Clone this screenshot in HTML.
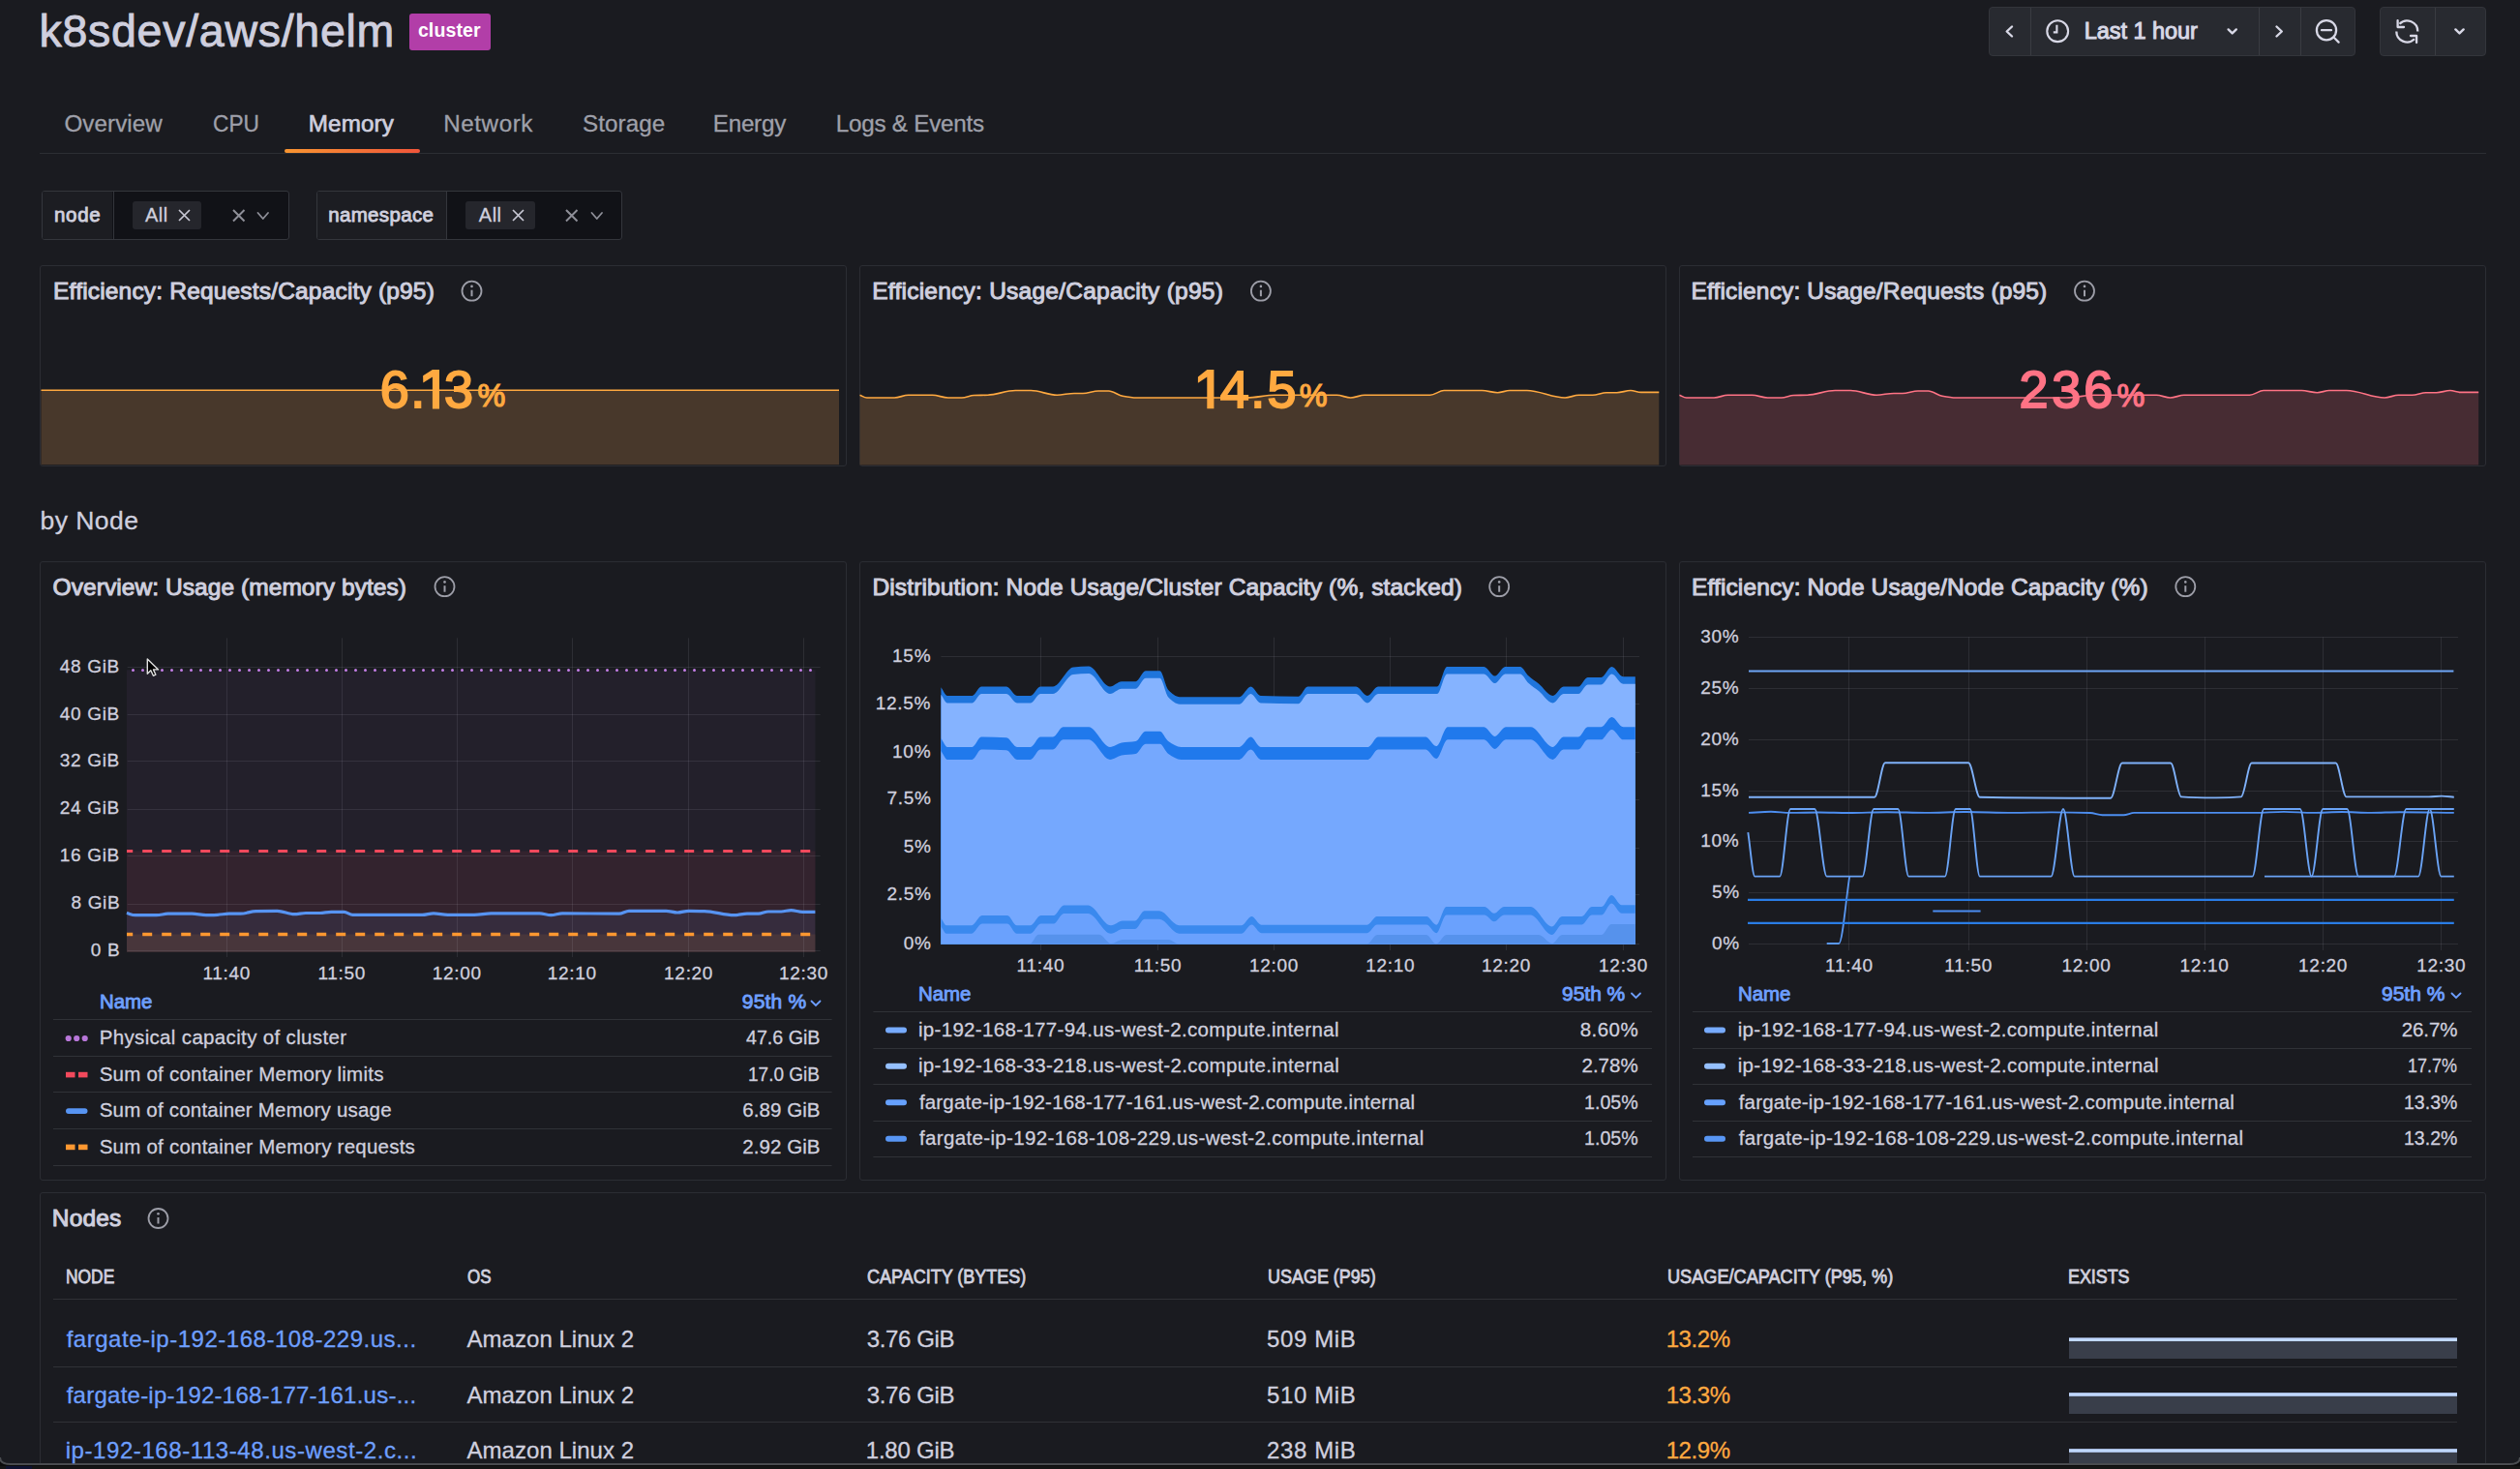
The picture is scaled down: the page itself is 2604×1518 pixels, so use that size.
<!DOCTYPE html>
<html><head><meta charset="utf-8"><style>
html,body{margin:0;padding:0}
body{width:2604px;height:1518px;background:#1a1b20;position:relative;overflow:hidden;font-family:"Liberation Sans",sans-serif}
.t{position:absolute;white-space:nowrap;line-height:1}
.a{position:absolute;box-sizing:border-box}
svg{position:absolute;left:0;top:0}
</style></head><body>
<div class="a" style="left:41px;top:274px;width:834px;height:208px;border:1px solid #2b2d33;border-radius:3px"></div>
<div class="a" style="left:41px;top:580px;width:834px;height:640px;border:1px solid #2b2d33;border-radius:3px"></div>
<div class="a" style="left:888px;top:274px;width:834px;height:208px;border:1px solid #2b2d33;border-radius:3px"></div>
<div class="a" style="left:888px;top:580px;width:834px;height:640px;border:1px solid #2b2d33;border-radius:3px"></div>
<div class="a" style="left:1735px;top:274px;width:834px;height:208px;border:1px solid #2b2d33;border-radius:3px"></div>
<div class="a" style="left:1735px;top:580px;width:834px;height:640px;border:1px solid #2b2d33;border-radius:3px"></div>
<div class="a" style="left:41px;top:1232px;width:2528px;height:328px;border:1px solid #2b2d33;border-radius:3px"></div>
<div class="a" style="left:423.3px;top:14.3px;width:83.5px;height:37.7px;background:#b23ea8;border-radius:3px"></div>
<div class="a" style="left:2055px;top:7px;width:379px;height:51px;background:#282a30;border:1px solid #33353b;border-radius:4px"></div>
<div class="a" style="left:2459px;top:7px;width:110px;height:51px;background:#282a30;border:1px solid #33353b;border-radius:4px"></div>
<div class="a" style="left:2098px;top:8px;width:1px;height:49px;background:#3a3c42"></div>
<div class="a" style="left:2334px;top:8px;width:1px;height:49px;background:#3a3c42"></div>
<div class="a" style="left:2377px;top:8px;width:1px;height:49px;background:#3a3c42"></div>
<div class="a" style="left:2516px;top:8px;width:1px;height:49px;background:#3a3c42"></div>
<div class="a" style="left:41px;top:158px;width:2528px;height:1px;background:#2c2e33"></div>
<div class="a" style="left:294px;top:154px;width:140px;height:4px;background:linear-gradient(90deg,#f89531,#f0553a);border-radius:2px"></div>
<div class="a" style="left:43.3px;top:197px;width:255.39999999999998px;height:51px;background:#111217;border:1px solid #34363c;border-radius:3px"></div>
<div class="a" style="left:44.3px;top:198px;width:72.2px;height:49px;background:#1c1d22;border-radius:2px 0 0 2px"></div>
<div class="a" style="left:116.5px;top:198px;width:1.0px;height:49px;background:#34363c"></div>
<div class="a" style="left:137px;top:208.2px;width:70.6px;height:28.600000000000023px;background:#25262c;border-radius:3px"></div>
<div class="a" style="left:326.5px;top:197px;width:316.0px;height:51px;background:#111217;border:1px solid #34363c;border-radius:3px"></div>
<div class="a" style="left:327.5px;top:198px;width:133.89999999999998px;height:49px;background:#1c1d22;border-radius:2px 0 0 2px"></div>
<div class="a" style="left:461.4px;top:198px;width:1.0px;height:49px;background:#34363c"></div>
<div class="a" style="left:481.3px;top:208.2px;width:71.49999999999994px;height:28.600000000000023px;background:#25262c;border-radius:3px"></div>
<svg width="2604" height="1518" viewBox="0 0 2604 1518"><path d="M185 217L196 228M196 217L185 228" stroke="#c8c8d4" stroke-width="1.7" fill="none"/><path d="M241 217L252.5 228.5M252.5 217L241 228.5" stroke="#8e8f98" stroke-width="2" fill="none"/><path d="M266.5 220L271.75 226L277 220" stroke="#8e8f98" stroke-width="1.8" fill="none" stroke-linecap="round" stroke-linejoin="round"/><path d="M530 217L541 228M541 217L530 228" stroke="#c8c8d4" stroke-width="1.7" fill="none"/><path d="M585 217L596.5 228.5M596.5 217L585 228.5" stroke="#8e8f98" stroke-width="2" fill="none"/><path d="M611.5 220L616.75 226L622 220" stroke="#8e8f98" stroke-width="1.8" fill="none" stroke-linecap="round" stroke-linejoin="round"/><path d="M2079 27.5L2073.7 32.5L2079 37.5" stroke="#d8d8e6" stroke-width="2.4" fill="none" stroke-linecap="round" stroke-linejoin="round"/><path d="M2352.5 27.5L2357.8 32.5L2352.5 37.5" stroke="#d8d8e6" stroke-width="2.4" fill="none" stroke-linecap="round" stroke-linejoin="round"/><path d="M2302.6 30.4L2306.7 34.4L2310.8 30.4" stroke="#d8d8e6" stroke-width="2.4" fill="none" stroke-linecap="round" stroke-linejoin="round"/><path d="M2537.4 30.4L2541.5 34.4L2545.6000000000004 30.4" stroke="#d8d8e6" stroke-width="2.4" fill="none" stroke-linecap="round" stroke-linejoin="round"/><circle cx="2126.2" cy="32.2" r="10.9" stroke="#d8d8e6" stroke-width="2.1" fill="none"/><path d="M2125.4 25.8V33.4H2121.8" stroke="#d8d8e6" stroke-width="2.1" fill="none"/><circle cx="2404" cy="31.2" r="10.1" stroke="#d8d8e6" stroke-width="2.3" fill="none"/><path d="M2399 31.2H2409M2412 39L2416.6 43.6" stroke="#d8d8e6" stroke-width="2.3" fill="none" stroke-linecap="round"/><path d="M2479.5 24.7A11 11 0 0 1 2498.3 32.5" stroke="#d8d8e6" stroke-width="2.3" fill="none"/><path d="M2476.3 32.5A11 11 0 0 0 2495 40.3" stroke="#d8d8e6" stroke-width="2.3" fill="none"/><path d="M2477.6 21.2V28H2484M2497.1 44V37H2491" stroke="#d8d8e6" stroke-width="2.3" fill="none" stroke-linecap="round" stroke-linejoin="round"/><circle cx="487.5" cy="300.7" r="10" stroke="#9d9ea8" stroke-width="1.8" fill="none"/><path d="M487.5 299.7V306.2" stroke="#9d9ea8" stroke-width="2" /><circle cx="487.5" cy="295.9" r="1.3" fill="#9d9ea8"/><circle cx="1302.9" cy="300.7" r="10" stroke="#9d9ea8" stroke-width="1.8" fill="none"/><path d="M1302.9 299.7V306.2" stroke="#9d9ea8" stroke-width="2" /><circle cx="1302.9" cy="295.9" r="1.3" fill="#9d9ea8"/><circle cx="2154" cy="300.7" r="10" stroke="#9d9ea8" stroke-width="1.8" fill="none"/><path d="M2154 299.7V306.2" stroke="#9d9ea8" stroke-width="2" /><circle cx="2154" cy="295.9" r="1.3" fill="#9d9ea8"/><circle cx="459.5" cy="606.2" r="10" stroke="#9d9ea8" stroke-width="1.8" fill="none"/><path d="M459.5 605.2V611.7" stroke="#9d9ea8" stroke-width="2" /><circle cx="459.5" cy="601.4000000000001" r="1.3" fill="#9d9ea8"/><circle cx="1549.2" cy="606.2" r="10" stroke="#9d9ea8" stroke-width="1.8" fill="none"/><path d="M1549.2 605.2V611.7" stroke="#9d9ea8" stroke-width="2" /><circle cx="1549.2" cy="601.4000000000001" r="1.3" fill="#9d9ea8"/><circle cx="2258.3" cy="606.2" r="10" stroke="#9d9ea8" stroke-width="1.8" fill="none"/><path d="M2258.3 605.2V611.7" stroke="#9d9ea8" stroke-width="2" /><circle cx="2258.3" cy="601.4000000000001" r="1.3" fill="#9d9ea8"/><circle cx="163.5" cy="1259" r="10" stroke="#9d9ea8" stroke-width="1.8" fill="none"/><path d="M163.5 1258V1264.5" stroke="#9d9ea8" stroke-width="2" /><circle cx="163.5" cy="1254.2" r="1.3" fill="#9d9ea8"/><rect x="42.5" y="403.2" width="824.5" height="77" fill="#48382b"/><path d="M42.5 403.2H867" stroke="#ffa940" stroke-width="1.6"/><path d="M888.57 408.21C890.95 409.17 893.33 411.07 895.71 411.07C905.24 411.07 914.76 411.07 924.29 411.07C929.05 411.07 933.81 408.21 938.57 408.21C946.90 408.21 955.24 408.21 963.57 408.21C968.93 408.21 974.29 411.07 979.64 411.07C984.40 411.07 989.17 411.07 993.93 411.07C998.10 411.07 1002.26 408.76 1006.43 408.57C1011.19 408.36 1015.95 408.41 1020.71 408.21C1030.24 407.83 1039.76 403.57 1049.29 403.57C1054.64 403.57 1060.00 403.57 1065.36 403.57C1074.29 403.57 1083.21 408.21 1092.14 408.21C1098.10 408.21 1104.05 406.43 1110.00 406.43C1112.98 406.43 1115.95 406.43 1118.93 406.43C1124.29 406.43 1129.64 403.93 1135.00 403.93C1138.57 403.93 1142.14 403.93 1145.71 403.93C1150.48 403.93 1155.24 408.39 1160.00 409.29C1164.76 410.18 1169.52 411.07 1174.29 411.07C1200.48 411.07 1226.67 411.07 1252.86 411.07C1264.76 411.07 1276.67 411.07 1288.57 411.07C1298.10 411.07 1307.62 408.21 1317.14 408.21C1331.43 408.21 1345.71 408.21 1360.00 408.21C1367.14 408.21 1374.29 408.21 1381.43 408.21C1386.19 408.21 1390.95 411.07 1395.71 411.07C1400.48 411.07 1405.24 408.21 1410.00 408.21C1432.62 408.21 1455.24 408.21 1477.86 408.21C1482.62 408.21 1487.38 403.57 1492.14 403.57C1505.24 403.57 1518.33 403.57 1531.43 403.57C1536.79 403.57 1542.14 405.71 1547.50 405.71C1551.67 405.71 1555.83 403.57 1560.00 403.57C1565.95 403.57 1571.90 403.57 1577.86 403.57C1590.95 403.57 1604.05 411.07 1617.14 411.07C1621.90 411.07 1626.67 408.21 1631.43 408.21C1636.19 408.21 1640.95 408.21 1645.71 408.21C1650.48 408.21 1655.24 405.71 1660.00 405.71C1663.57 405.71 1667.14 405.71 1670.71 405.71C1675.48 405.71 1680.24 403.57 1685.00 403.57C1688.57 403.57 1692.14 405.36 1695.71 405.36C1701.90 405.36 1708.10 405.36 1714.29 405.36L1714.29 480.5L888.57 480.5Z" fill="#48382b" /><path d="M888.57 408.21C890.95 409.17 893.33 411.07 895.71 411.07C905.24 411.07 914.76 411.07 924.29 411.07C929.05 411.07 933.81 408.21 938.57 408.21C946.90 408.21 955.24 408.21 963.57 408.21C968.93 408.21 974.29 411.07 979.64 411.07C984.40 411.07 989.17 411.07 993.93 411.07C998.10 411.07 1002.26 408.76 1006.43 408.57C1011.19 408.36 1015.95 408.41 1020.71 408.21C1030.24 407.83 1039.76 403.57 1049.29 403.57C1054.64 403.57 1060.00 403.57 1065.36 403.57C1074.29 403.57 1083.21 408.21 1092.14 408.21C1098.10 408.21 1104.05 406.43 1110.00 406.43C1112.98 406.43 1115.95 406.43 1118.93 406.43C1124.29 406.43 1129.64 403.93 1135.00 403.93C1138.57 403.93 1142.14 403.93 1145.71 403.93C1150.48 403.93 1155.24 408.39 1160.00 409.29C1164.76 410.18 1169.52 411.07 1174.29 411.07C1200.48 411.07 1226.67 411.07 1252.86 411.07C1264.76 411.07 1276.67 411.07 1288.57 411.07C1298.10 411.07 1307.62 408.21 1317.14 408.21C1331.43 408.21 1345.71 408.21 1360.00 408.21C1367.14 408.21 1374.29 408.21 1381.43 408.21C1386.19 408.21 1390.95 411.07 1395.71 411.07C1400.48 411.07 1405.24 408.21 1410.00 408.21C1432.62 408.21 1455.24 408.21 1477.86 408.21C1482.62 408.21 1487.38 403.57 1492.14 403.57C1505.24 403.57 1518.33 403.57 1531.43 403.57C1536.79 403.57 1542.14 405.71 1547.50 405.71C1551.67 405.71 1555.83 403.57 1560.00 403.57C1565.95 403.57 1571.90 403.57 1577.86 403.57C1590.95 403.57 1604.05 411.07 1617.14 411.07C1621.90 411.07 1626.67 408.21 1631.43 408.21C1636.19 408.21 1640.95 408.21 1645.71 408.21C1650.48 408.21 1655.24 405.71 1660.00 405.71C1663.57 405.71 1667.14 405.71 1670.71 405.71C1675.48 405.71 1680.24 403.57 1685.00 403.57C1688.57 403.57 1692.14 405.36 1695.71 405.36C1701.90 405.36 1708.10 405.36 1714.29 405.36" stroke="#ffa940" stroke-width="1.6" fill="none" stroke-linejoin="round" /><path d="M1735.47 408.21C1737.85 409.17 1740.23 411.07 1742.61 411.07C1752.14 411.07 1761.66 411.07 1771.19 411.07C1775.95 411.07 1780.71 408.21 1785.47 408.21C1793.80 408.21 1802.14 408.21 1810.47 408.21C1815.83 408.21 1821.19 411.07 1826.54 411.07C1831.30 411.07 1836.07 411.07 1840.83 411.07C1845.00 411.07 1849.16 408.76 1853.33 408.57C1858.09 408.36 1862.85 408.41 1867.61 408.21C1877.14 407.83 1886.66 403.57 1896.19 403.57C1901.54 403.57 1906.90 403.57 1912.26 403.57C1921.19 403.57 1930.11 408.21 1939.04 408.21C1945.00 408.21 1950.95 406.43 1956.90 406.43C1959.88 406.43 1962.85 406.43 1965.83 406.43C1971.19 406.43 1976.54 403.93 1981.90 403.93C1985.47 403.93 1989.04 403.93 1992.61 403.93C1997.38 403.93 2002.14 408.39 2006.90 409.29C2011.66 410.18 2016.42 411.07 2021.19 411.07C2047.38 411.07 2073.57 411.07 2099.76 411.07C2111.66 411.07 2123.57 411.07 2135.47 411.07C2145.00 411.07 2154.52 408.21 2164.04 408.21C2178.33 408.21 2192.61 408.21 2206.90 408.21C2214.04 408.21 2221.19 408.21 2228.33 408.21C2233.09 408.21 2237.85 411.07 2242.61 411.07C2247.38 411.07 2252.14 408.21 2256.90 408.21C2279.52 408.21 2302.14 408.21 2324.76 408.21C2329.52 408.21 2334.28 403.57 2339.04 403.57C2352.14 403.57 2365.23 403.57 2378.33 403.57C2383.69 403.57 2389.04 405.71 2394.40 405.71C2398.57 405.71 2402.73 403.57 2406.90 403.57C2412.85 403.57 2418.80 403.57 2424.76 403.57C2437.85 403.57 2450.95 411.07 2464.04 411.07C2468.80 411.07 2473.57 408.21 2478.33 408.21C2483.09 408.21 2487.85 408.21 2492.61 408.21C2497.38 408.21 2502.14 405.71 2506.90 405.71C2510.47 405.71 2514.04 405.71 2517.61 405.71C2522.38 405.71 2527.14 403.57 2531.90 403.57C2535.47 403.57 2539.04 405.36 2542.61 405.36C2548.80 405.36 2555.00 405.36 2561.19 405.36L2561.19 480.5L1735.47 480.5Z" fill="#472c33" /><path d="M1735.47 408.21C1737.85 409.17 1740.23 411.07 1742.61 411.07C1752.14 411.07 1761.66 411.07 1771.19 411.07C1775.95 411.07 1780.71 408.21 1785.47 408.21C1793.80 408.21 1802.14 408.21 1810.47 408.21C1815.83 408.21 1821.19 411.07 1826.54 411.07C1831.30 411.07 1836.07 411.07 1840.83 411.07C1845.00 411.07 1849.16 408.76 1853.33 408.57C1858.09 408.36 1862.85 408.41 1867.61 408.21C1877.14 407.83 1886.66 403.57 1896.19 403.57C1901.54 403.57 1906.90 403.57 1912.26 403.57C1921.19 403.57 1930.11 408.21 1939.04 408.21C1945.00 408.21 1950.95 406.43 1956.90 406.43C1959.88 406.43 1962.85 406.43 1965.83 406.43C1971.19 406.43 1976.54 403.93 1981.90 403.93C1985.47 403.93 1989.04 403.93 1992.61 403.93C1997.38 403.93 2002.14 408.39 2006.90 409.29C2011.66 410.18 2016.42 411.07 2021.19 411.07C2047.38 411.07 2073.57 411.07 2099.76 411.07C2111.66 411.07 2123.57 411.07 2135.47 411.07C2145.00 411.07 2154.52 408.21 2164.04 408.21C2178.33 408.21 2192.61 408.21 2206.90 408.21C2214.04 408.21 2221.19 408.21 2228.33 408.21C2233.09 408.21 2237.85 411.07 2242.61 411.07C2247.38 411.07 2252.14 408.21 2256.90 408.21C2279.52 408.21 2302.14 408.21 2324.76 408.21C2329.52 408.21 2334.28 403.57 2339.04 403.57C2352.14 403.57 2365.23 403.57 2378.33 403.57C2383.69 403.57 2389.04 405.71 2394.40 405.71C2398.57 405.71 2402.73 403.57 2406.90 403.57C2412.85 403.57 2418.80 403.57 2424.76 403.57C2437.85 403.57 2450.95 411.07 2464.04 411.07C2468.80 411.07 2473.57 408.21 2478.33 408.21C2483.09 408.21 2487.85 408.21 2492.61 408.21C2497.38 408.21 2502.14 405.71 2506.90 405.71C2510.47 405.71 2514.04 405.71 2517.61 405.71C2522.38 405.71 2527.14 403.57 2531.90 403.57C2535.47 403.57 2539.04 405.36 2542.61 405.36C2548.80 405.36 2555.00 405.36 2561.19 405.36" stroke="#ff7385" stroke-width="1.6" fill="none" stroke-linejoin="round" /><polygon points="437.1,388.3 446.9,381.9 454,381.9 454,422.4 446.9,422.4 446.9,389.4 437.3,395.6" fill="#ffa940"/><polygon points="1237.9,389.4 1247.3,382.1 1254.4,382.1 1254.4,422.2 1247.3,422.2 1247.3,389.6 1237.9,395.8" fill="#ffa940"/><path d="M972.4 678.5H1694" stroke="rgba(204,204,220,0.11)" stroke-width="1"/><path d="M972.4 727.5H1694" stroke="rgba(204,204,220,0.11)" stroke-width="1"/><path d="M972.4 777.5H1694" stroke="rgba(204,204,220,0.11)" stroke-width="1"/><path d="M972.4 826.5H1694" stroke="rgba(204,204,220,0.11)" stroke-width="1"/><path d="M972.4 876.5H1694" stroke="rgba(204,204,220,0.11)" stroke-width="1"/><path d="M972.4 924.5H1694" stroke="rgba(204,204,220,0.11)" stroke-width="1"/><path d="M972.4 975.5H1694" stroke="rgba(204,204,220,0.11)" stroke-width="1"/><path d="M1075.5 658.7V982" stroke="rgba(204,204,220,0.11)" stroke-width="1"/><path d="M1196.5 658.7V982" stroke="rgba(204,204,220,0.11)" stroke-width="1"/><path d="M1316.5 658.7V982" stroke="rgba(204,204,220,0.11)" stroke-width="1"/><path d="M1436.5 658.7V982" stroke="rgba(204,204,220,0.11)" stroke-width="1"/><path d="M1556.5 658.7V982" stroke="rgba(204,204,220,0.11)" stroke-width="1"/><path d="M1677.5 658.7V982" stroke="rgba(204,204,220,0.11)" stroke-width="1"/><path d="M1807 658.5H2540" stroke="rgba(204,204,220,0.11)" stroke-width="1"/><path d="M1807 711.5H2540" stroke="rgba(204,204,220,0.11)" stroke-width="1"/><path d="M1807 764.5H2540" stroke="rgba(204,204,220,0.11)" stroke-width="1"/><path d="M1807 817.5H2540" stroke="rgba(204,204,220,0.11)" stroke-width="1"/><path d="M1807 869.5H2540" stroke="rgba(204,204,220,0.11)" stroke-width="1"/><path d="M1807 922.5H2540" stroke="rgba(204,204,220,0.11)" stroke-width="1"/><path d="M1807 975.5H2540" stroke="rgba(204,204,220,0.11)" stroke-width="1"/><path d="M1910.5 658.4V982" stroke="rgba(204,204,220,0.11)" stroke-width="1"/><path d="M2034.5 658.4V982" stroke="rgba(204,204,220,0.11)" stroke-width="1"/><path d="M2156.5 658.4V982" stroke="rgba(204,204,220,0.11)" stroke-width="1"/><path d="M2278.5 658.4V982" stroke="rgba(204,204,220,0.11)" stroke-width="1"/><path d="M2400.5 658.4V982" stroke="rgba(204,204,220,0.11)" stroke-width="1"/><path d="M2522.5 658.4V982" stroke="rgba(204,204,220,0.11)" stroke-width="1"/><rect x="131" y="692.2" width="711.5" height="291.6" fill="#b877d9" fill-opacity="0.06"/><rect x="131" y="879.5" width="711.5" height="104.3" fill="#f2495c" fill-opacity="0.08"/><path d="M130.90 943.50C133.83 944.23 136.77 945.70 139.70 945.70C147.03 945.70 154.37 945.70 161.70 945.70C165.63 945.70 169.57 944.20 173.50 944.20C181.80 944.20 190.10 944.20 198.40 944.20C203.27 944.20 208.13 945.70 213.00 945.70C216.97 945.70 220.93 945.50 224.90 945.30C228.80 945.11 232.70 944.20 236.60 944.20C240.50 944.20 244.40 944.20 248.30 944.20C253.70 944.20 259.10 941.74 264.50 941.60C271.83 941.41 279.17 941.30 286.50 941.30C292.37 941.30 298.23 944.70 304.10 944.70C308.03 944.70 311.97 943.50 315.90 943.50C320.80 943.50 325.70 943.50 330.60 943.50C334.50 943.50 338.40 942.30 342.30 942.30C346.70 942.30 351.10 942.30 355.50 942.30C358.47 942.30 361.43 945.40 364.40 945.40C388.37 945.40 412.33 945.40 436.30 945.40C440.20 945.40 444.10 943.80 448.00 943.80C452.90 943.80 457.80 945.40 462.70 945.40C471.80 945.40 480.90 945.40 490.00 945.40C495.87 945.40 501.73 943.80 507.60 943.80C524.23 943.80 540.87 943.80 557.50 943.80C561.43 943.80 565.37 945.70 569.30 945.70C573.20 945.70 577.10 943.80 581.00 943.80C600.60 943.80 620.20 944.20 639.80 944.20C643.20 944.20 646.60 941.30 650.00 941.30C662.73 941.30 675.47 941.30 688.20 941.30C692.13 941.30 696.07 943.00 700.00 943.00C703.90 943.00 707.80 941.30 711.70 941.30C717.10 941.30 722.50 941.44 727.90 941.60C738.17 941.91 748.43 945.70 758.70 945.70C763.13 945.70 767.57 944.20 772.00 944.20C775.90 944.20 779.80 944.20 783.70 944.20C787.13 944.20 790.57 942.00 794.00 942.00C798.40 942.00 802.80 942.00 807.20 942.00C810.63 942.00 814.07 940.60 817.50 940.60C821.40 940.60 825.30 942.30 829.20 942.30C833.60 942.30 838.00 942.30 842.40 942.30L842.40 983.8L130.90 983.8Z" fill="#5794f2" fill-opacity="0.08"/><rect x="131" y="965.5" width="711.5" height="18.3" fill="#ff9830" fill-opacity="0.09"/><path d="M131.7 689.5H847.6" stroke="rgba(204,204,220,0.11)" stroke-width="1"/><path d="M131.7 738.5H847.6" stroke="rgba(204,204,220,0.11)" stroke-width="1"/><path d="M131.7 786.5H847.6" stroke="rgba(204,204,220,0.11)" stroke-width="1"/><path d="M131.7 836.5H847.6" stroke="rgba(204,204,220,0.11)" stroke-width="1"/><path d="M131.7 884.5H847.6" stroke="rgba(204,204,220,0.11)" stroke-width="1"/><path d="M131.7 934.5H847.6" stroke="rgba(204,204,220,0.11)" stroke-width="1"/><path d="M131.7 982.5H847.6" stroke="rgba(204,204,220,0.11)" stroke-width="1"/><path d="M234.5 659.3V989" stroke="rgba(204,204,220,0.11)" stroke-width="1"/><path d="M353.5 659.3V989" stroke="rgba(204,204,220,0.11)" stroke-width="1"/><path d="M472.5 659.3V989" stroke="rgba(204,204,220,0.11)" stroke-width="1"/><path d="M591.5 659.3V989" stroke="rgba(204,204,220,0.11)" stroke-width="1"/><path d="M711.5 659.3V989" stroke="rgba(204,204,220,0.11)" stroke-width="1"/><path d="M830.5 659.3V989" stroke="rgba(204,204,220,0.11)" stroke-width="1"/><path d="M137.5 692.4H843" stroke="#c47ee6" stroke-width="3" stroke-dasharray="0 10" stroke-linecap="round"/><path d="M131 879.5H842.5" stroke="#f2495c" stroke-width="3" stroke-dasharray="10 10" stroke-dashoffset="3.8"/><path d="M130.90 943.50C133.83 944.23 136.77 945.70 139.70 945.70C147.03 945.70 154.37 945.70 161.70 945.70C165.63 945.70 169.57 944.20 173.50 944.20C181.80 944.20 190.10 944.20 198.40 944.20C203.27 944.20 208.13 945.70 213.00 945.70C216.97 945.70 220.93 945.50 224.90 945.30C228.80 945.11 232.70 944.20 236.60 944.20C240.50 944.20 244.40 944.20 248.30 944.20C253.70 944.20 259.10 941.74 264.50 941.60C271.83 941.41 279.17 941.30 286.50 941.30C292.37 941.30 298.23 944.70 304.10 944.70C308.03 944.70 311.97 943.50 315.90 943.50C320.80 943.50 325.70 943.50 330.60 943.50C334.50 943.50 338.40 942.30 342.30 942.30C346.70 942.30 351.10 942.30 355.50 942.30C358.47 942.30 361.43 945.40 364.40 945.40C388.37 945.40 412.33 945.40 436.30 945.40C440.20 945.40 444.10 943.80 448.00 943.80C452.90 943.80 457.80 945.40 462.70 945.40C471.80 945.40 480.90 945.40 490.00 945.40C495.87 945.40 501.73 943.80 507.60 943.80C524.23 943.80 540.87 943.80 557.50 943.80C561.43 943.80 565.37 945.70 569.30 945.70C573.20 945.70 577.10 943.80 581.00 943.80C600.60 943.80 620.20 944.20 639.80 944.20C643.20 944.20 646.60 941.30 650.00 941.30C662.73 941.30 675.47 941.30 688.20 941.30C692.13 941.30 696.07 943.00 700.00 943.00C703.90 943.00 707.80 941.30 711.70 941.30C717.10 941.30 722.50 941.44 727.90 941.60C738.17 941.91 748.43 945.70 758.70 945.70C763.13 945.70 767.57 944.20 772.00 944.20C775.90 944.20 779.80 944.20 783.70 944.20C787.13 944.20 790.57 942.00 794.00 942.00C798.40 942.00 802.80 942.00 807.20 942.00C810.63 942.00 814.07 940.60 817.50 940.60C821.40 940.60 825.30 942.30 829.20 942.30C833.60 942.30 838.00 942.30 842.40 942.30" stroke="#5794f2" stroke-width="3.2" fill="none" stroke-linejoin="round" /><path d="M131 965.5H837.5" stroke="#ff9830" stroke-width="3.5" stroke-dasharray="10 10" stroke-dashoffset="3.8"/><path d="M152.3 681V696.3L155.8 692.8L158.4 698.3L160.9 697.2L158.5 691.9H163.6Z" fill="#000" stroke="#e0e0e0" stroke-width="1.4" stroke-linejoin="round"/><path d="M972.40 710.20C974.60 713.13 976.80 719.00 979.00 719.00C987.53 719.00 996.07 719.00 1004.60 719.00C1007.73 719.00 1010.87 709.50 1014.00 709.50C1022.67 709.50 1031.33 709.50 1040.00 709.50C1043.67 709.50 1047.33 719.00 1051.00 719.00C1055.67 719.00 1060.33 719.00 1065.00 719.00C1068.33 719.00 1071.67 709.50 1075.00 709.50C1079.33 709.50 1083.67 709.50 1088.00 709.50C1095.00 709.50 1102.00 690.46 1109.00 689.60C1114.33 688.94 1119.67 688.50 1125.00 688.50C1132.33 688.50 1139.67 709.50 1147.00 709.50C1151.00 709.50 1155.00 704.30 1159.00 704.30C1163.83 704.30 1168.67 704.30 1173.50 704.30C1176.93 704.30 1180.37 693.30 1183.80 693.30C1188.70 693.30 1193.60 693.30 1198.50 693.30C1201.43 693.30 1204.37 710.09 1207.30 713.00C1211.20 716.87 1215.10 720.20 1219.00 720.20C1239.57 720.20 1260.13 720.20 1280.70 720.20C1284.63 720.20 1288.57 709.50 1292.50 709.50C1295.90 709.50 1299.30 718.85 1302.70 719.00C1315.70 719.56 1328.70 719.70 1341.70 719.70C1344.90 719.70 1348.10 709.50 1351.30 709.50C1367.93 709.50 1384.57 709.50 1401.20 709.50C1405.13 709.50 1409.07 719.00 1413.00 719.00C1416.67 719.00 1420.33 709.50 1424.00 709.50C1444.33 709.50 1464.67 709.50 1485.00 709.50C1488.40 709.50 1491.80 688.90 1495.20 688.90C1507.93 688.90 1520.67 688.90 1533.40 688.90C1537.17 688.90 1540.93 698.50 1544.70 698.50C1548.27 698.50 1551.83 688.90 1555.40 688.90C1560.53 688.90 1565.67 688.90 1570.80 688.90C1573.73 688.90 1576.67 695.84 1579.60 698.50C1583.07 701.64 1586.53 703.70 1590.00 706.50C1594.87 710.43 1599.73 719.00 1604.60 719.00C1608.27 719.00 1611.93 709.50 1615.60 709.50C1620.73 709.50 1625.87 709.50 1631.00 709.50C1634.20 709.50 1637.40 699.90 1640.60 699.90C1645.23 699.90 1649.87 699.90 1654.50 699.90C1658.17 699.90 1661.83 688.90 1665.50 688.90C1669.43 688.90 1673.37 699.20 1677.30 699.20C1681.47 699.20 1685.63 699.20 1689.80 699.20L1689.80 975.8L972.40 975.8Z" fill="#1f75dc" /><path d="M972.40 717.70C974.60 720.63 976.80 726.50 979.00 726.50C987.53 726.50 996.07 726.50 1004.60 726.50C1007.73 726.50 1010.87 717.00 1014.00 717.00C1022.67 717.00 1031.33 717.00 1040.00 717.00C1043.67 717.00 1047.33 726.50 1051.00 726.50C1055.67 726.50 1060.33 726.50 1065.00 726.50C1068.33 726.50 1071.67 717.00 1075.00 717.00C1079.33 717.00 1083.67 717.00 1088.00 717.00C1095.00 717.00 1102.00 697.96 1109.00 697.10C1114.33 696.44 1119.67 696.00 1125.00 696.00C1132.33 696.00 1139.67 717.00 1147.00 717.00C1151.00 717.00 1155.00 711.80 1159.00 711.80C1163.83 711.80 1168.67 711.80 1173.50 711.80C1176.93 711.80 1180.37 700.80 1183.80 700.80C1188.70 700.80 1193.60 700.80 1198.50 700.80C1201.43 700.80 1204.37 717.59 1207.30 720.50C1211.20 724.37 1215.10 727.70 1219.00 727.70C1239.57 727.70 1260.13 727.70 1280.70 727.70C1284.63 727.70 1288.57 717.00 1292.50 717.00C1295.90 717.00 1299.30 726.35 1302.70 726.50C1315.70 727.06 1328.70 727.20 1341.70 727.20C1344.90 727.20 1348.10 717.00 1351.30 717.00C1367.93 717.00 1384.57 717.00 1401.20 717.00C1405.13 717.00 1409.07 726.50 1413.00 726.50C1416.67 726.50 1420.33 717.00 1424.00 717.00C1444.33 717.00 1464.67 717.00 1485.00 717.00C1488.40 717.00 1491.80 696.40 1495.20 696.40C1507.93 696.40 1520.67 696.40 1533.40 696.40C1537.17 696.40 1540.93 706.00 1544.70 706.00C1548.27 706.00 1551.83 696.40 1555.40 696.40C1560.53 696.40 1565.67 696.40 1570.80 696.40C1573.73 696.40 1576.67 703.34 1579.60 706.00C1583.07 709.14 1586.53 711.20 1590.00 714.00C1594.87 717.93 1599.73 726.50 1604.60 726.50C1608.27 726.50 1611.93 717.00 1615.60 717.00C1620.73 717.00 1625.87 717.00 1631.00 717.00C1634.20 717.00 1637.40 707.40 1640.60 707.40C1645.23 707.40 1649.87 707.40 1654.50 707.40C1658.17 707.40 1661.83 696.40 1665.50 696.40C1669.43 696.40 1673.37 706.70 1677.30 706.70C1681.47 706.70 1685.63 706.70 1689.80 706.70L1689.80 975.8L972.40 975.8Z" fill="#85b3ff" /><path d="M972.40 763.00C974.60 765.97 976.80 771.90 979.00 771.90C987.53 771.90 996.07 771.90 1004.60 771.90C1007.73 771.90 1010.87 761.60 1014.00 761.60C1022.67 761.60 1031.33 761.78 1040.00 762.30C1043.67 762.52 1047.33 771.90 1051.00 771.90C1055.67 771.90 1060.33 771.90 1065.00 771.90C1068.33 771.90 1071.67 761.60 1075.00 761.60C1079.33 761.60 1083.67 761.60 1088.00 761.60C1091.53 761.60 1095.07 751.30 1098.60 751.30C1107.40 751.30 1116.20 751.30 1125.00 751.30C1132.33 751.30 1139.67 771.90 1147.00 771.90C1151.00 771.90 1155.00 768.16 1159.00 767.50C1163.83 766.71 1168.67 766.95 1173.50 766.00C1176.93 765.33 1180.37 755.70 1183.80 755.70C1188.70 755.70 1193.60 755.70 1198.50 755.70C1201.43 755.70 1204.37 764.04 1207.30 766.00C1211.70 768.93 1216.10 771.90 1220.50 771.90C1240.57 771.90 1260.63 771.90 1280.70 771.90C1284.63 771.90 1288.57 761.60 1292.50 761.60C1295.90 761.60 1299.30 771.90 1302.70 771.90C1339.70 771.90 1376.70 771.90 1413.70 771.90C1417.13 771.90 1420.57 761.60 1424.00 761.60C1440.40 761.60 1456.80 761.60 1473.20 761.60C1476.87 761.60 1480.53 771.10 1484.20 771.10C1488.13 771.10 1492.07 751.30 1496.00 751.30C1508.47 751.30 1520.93 751.30 1533.40 751.30C1537.17 751.30 1540.93 760.90 1544.70 760.90C1548.47 760.90 1552.23 751.30 1556.00 751.30C1564.60 751.30 1573.20 751.30 1581.80 751.30C1589.40 751.30 1597.00 771.90 1604.60 771.90C1608.27 771.90 1611.93 761.60 1615.60 761.60C1620.73 761.60 1625.87 761.60 1631.00 761.60C1634.20 761.60 1637.40 751.30 1640.60 751.30C1645.23 751.30 1649.87 751.30 1654.50 751.30C1658.17 751.30 1661.83 741.00 1665.50 741.00C1669.43 741.00 1673.37 751.30 1677.30 751.30C1681.47 751.30 1685.63 751.30 1689.80 751.30L1689.80 975.8L972.40 975.8Z" fill="#2079ec" /><path d="M972.40 776.00C974.60 778.97 976.80 784.90 979.00 784.90C987.53 784.90 996.07 784.90 1004.60 784.90C1007.73 784.90 1010.87 774.60 1014.00 774.60C1022.67 774.60 1031.33 774.78 1040.00 775.30C1043.67 775.52 1047.33 784.90 1051.00 784.90C1055.67 784.90 1060.33 784.90 1065.00 784.90C1068.33 784.90 1071.67 774.60 1075.00 774.60C1079.33 774.60 1083.67 774.60 1088.00 774.60C1091.53 774.60 1095.07 764.30 1098.60 764.30C1107.40 764.30 1116.20 764.30 1125.00 764.30C1132.33 764.30 1139.67 784.90 1147.00 784.90C1151.00 784.90 1155.00 781.16 1159.00 780.50C1163.83 779.71 1168.67 779.95 1173.50 779.00C1176.93 778.33 1180.37 768.70 1183.80 768.70C1188.70 768.70 1193.60 768.70 1198.50 768.70C1201.43 768.70 1204.37 777.04 1207.30 779.00C1211.70 781.93 1216.10 784.90 1220.50 784.90C1240.57 784.90 1260.63 784.90 1280.70 784.90C1284.63 784.90 1288.57 774.60 1292.50 774.60C1295.90 774.60 1299.30 784.90 1302.70 784.90C1339.70 784.90 1376.70 784.90 1413.70 784.90C1417.13 784.90 1420.57 774.60 1424.00 774.60C1440.40 774.60 1456.80 774.60 1473.20 774.60C1476.87 774.60 1480.53 784.10 1484.20 784.10C1488.13 784.10 1492.07 764.30 1496.00 764.30C1508.47 764.30 1520.93 764.30 1533.40 764.30C1537.17 764.30 1540.93 773.90 1544.70 773.90C1548.47 773.90 1552.23 764.30 1556.00 764.30C1564.60 764.30 1573.20 764.30 1581.80 764.30C1589.40 764.30 1597.00 784.90 1604.60 784.90C1608.27 784.90 1611.93 774.60 1615.60 774.60C1620.73 774.60 1625.87 774.60 1631.00 774.60C1634.20 774.60 1637.40 764.30 1640.60 764.30C1645.23 764.30 1649.87 764.30 1654.50 764.30C1658.17 764.30 1661.83 754.00 1665.50 754.00C1669.43 754.00 1673.37 764.30 1677.30 764.30C1681.47 764.30 1685.63 764.30 1689.80 764.30L1689.80 975.8L972.40 975.8Z" fill="#75a8fe" /><path d="M972.50 949.00C974.30 951.40 976.10 956.20 977.90 956.20C986.60 956.20 995.30 956.20 1004.00 956.20C1007.60 956.20 1011.20 946.00 1014.80 946.00C1023.53 946.00 1032.27 946.00 1041.00 946.00C1044.17 946.00 1047.33 956.20 1050.50 956.20C1055.27 956.20 1060.03 956.20 1064.80 956.20C1068.37 956.20 1071.93 946.00 1075.50 946.00C1079.87 946.00 1084.23 946.00 1088.60 946.00C1092.17 946.00 1095.73 935.40 1099.30 935.40C1107.63 935.40 1115.97 935.40 1124.30 935.40C1132.20 935.40 1140.10 956.20 1148.00 956.20C1152.00 956.20 1156.00 951.40 1160.00 951.40C1164.33 951.40 1168.67 951.40 1173.00 951.40C1176.20 951.40 1179.40 941.30 1182.60 941.30C1187.73 941.30 1192.87 941.30 1198.00 941.30C1204.77 941.30 1211.53 956.20 1218.30 956.20C1239.87 956.20 1261.43 956.20 1283.00 956.20C1286.40 956.20 1289.80 947.00 1293.20 947.00C1296.60 947.00 1300.00 955.70 1303.40 955.70C1339.83 955.70 1376.27 955.70 1412.70 955.70C1416.13 955.70 1419.57 947.00 1423.00 947.00C1440.00 947.00 1457.00 947.00 1474.00 947.00C1477.43 947.00 1480.87 955.70 1484.30 955.70C1487.73 955.70 1491.17 937.00 1494.60 937.00C1507.67 937.00 1520.73 937.00 1533.80 937.00C1537.20 937.00 1540.60 943.70 1544.00 943.70C1547.43 943.70 1550.87 937.00 1554.30 937.00C1563.40 937.00 1572.50 937.00 1581.60 937.00C1589.00 937.00 1596.40 957.40 1603.80 957.40C1607.20 957.40 1610.60 947.00 1614.00 947.00C1620.83 947.00 1627.67 947.00 1634.50 947.00C1637.93 947.00 1641.37 937.00 1644.80 937.00C1648.20 937.00 1651.60 937.00 1655.00 937.00C1658.40 937.00 1661.80 925.00 1665.20 925.00C1668.63 925.00 1672.07 935.20 1675.50 935.20C1680.27 935.20 1685.03 935.20 1689.80 935.20L1689.80 975.8L972.50 975.8Z" fill="#3a89ee" /><path d="M972.50 957.50C974.30 959.90 976.10 964.70 977.90 964.70C986.60 964.70 995.30 964.70 1004.00 964.70C1007.60 964.70 1011.20 954.50 1014.80 954.50C1023.53 954.50 1032.27 954.50 1041.00 954.50C1044.17 954.50 1047.33 964.70 1050.50 964.70C1055.27 964.70 1060.03 964.70 1064.80 964.70C1068.37 964.70 1071.93 954.50 1075.50 954.50C1079.87 954.50 1084.23 954.50 1088.60 954.50C1092.17 954.50 1095.73 943.90 1099.30 943.90C1107.63 943.90 1115.97 943.90 1124.30 943.90C1132.20 943.90 1140.10 964.70 1148.00 964.70C1152.00 964.70 1156.00 959.90 1160.00 959.90C1164.33 959.90 1168.67 959.90 1173.00 959.90C1176.20 959.90 1179.40 949.80 1182.60 949.80C1187.73 949.80 1192.87 949.80 1198.00 949.80C1204.77 949.80 1211.53 964.70 1218.30 964.70C1239.87 964.70 1261.43 964.70 1283.00 964.70C1286.40 964.70 1289.80 955.50 1293.20 955.50C1296.60 955.50 1300.00 964.20 1303.40 964.20C1339.83 964.20 1376.27 964.20 1412.70 964.20C1416.13 964.20 1419.57 955.50 1423.00 955.50C1440.00 955.50 1457.00 955.50 1474.00 955.50C1477.43 955.50 1480.87 964.20 1484.30 964.20C1487.73 964.20 1491.17 945.50 1494.60 945.50C1507.67 945.50 1520.73 945.50 1533.80 945.50C1537.20 945.50 1540.60 952.20 1544.00 952.20C1547.43 952.20 1550.87 945.50 1554.30 945.50C1563.40 945.50 1572.50 945.50 1581.60 945.50C1589.00 945.50 1596.40 965.90 1603.80 965.90C1607.20 965.90 1610.60 955.50 1614.00 955.50C1620.83 955.50 1627.67 955.50 1634.50 955.50C1637.93 955.50 1641.37 945.50 1644.80 945.50C1648.20 945.50 1651.60 945.50 1655.00 945.50C1658.40 945.50 1661.80 933.50 1665.20 933.50C1668.63 933.50 1672.07 943.70 1675.50 943.70C1680.27 943.70 1685.03 943.70 1689.80 943.70L1689.80 975.8L972.50 975.8Z" fill="#6aa1fd" /><path d="M972.40 975.50C1002.93 975.50 1033.47 975.50 1064.00 975.50C1067.00 975.50 1070.00 965.70 1073.00 965.70C1094.00 965.70 1115.00 965.70 1136.00 965.70C1140.00 965.70 1144.00 975.00 1148.00 975.00C1152.00 975.00 1156.00 971.00 1160.00 971.00C1175.87 971.00 1191.73 971.00 1207.60 971.00C1211.07 971.00 1214.53 975.50 1218.00 975.50C1282.90 975.50 1347.80 975.50 1412.70 975.50C1416.13 975.50 1419.57 966.00 1423.00 966.00C1440.00 966.00 1457.00 966.00 1474.00 966.00C1477.33 966.00 1480.67 975.50 1484.00 975.50C1487.53 975.50 1491.07 966.00 1494.60 966.00C1526.40 966.00 1558.20 966.00 1590.00 966.00C1594.67 966.00 1599.33 975.00 1604.00 975.00C1607.33 975.00 1610.67 966.00 1614.00 966.00C1627.67 966.00 1641.33 966.00 1655.00 966.00C1658.33 966.00 1661.67 955.00 1665.00 955.00C1673.27 955.00 1681.53 955.00 1689.80 955.00L1689.80 975.8L972.40 975.8Z" fill="#5692ec" /><path d="M1807.00 693.50 L2535.40 693.50" stroke="#6ea6f6" stroke-width="1.9" fill="none" stroke-linejoin="round" /><path d="M1807.00 823.70C1850.33 823.70 1893.67 823.70 1937.00 823.70C1940.67 823.70 1944.33 788.20 1948.00 788.20C1976.70 788.20 2005.40 788.20 2034.10 788.20C2038.00 788.20 2041.90 823.62 2045.80 823.70C2090.87 824.62 2135.93 824.70 2181.00 824.70C2184.97 824.70 2188.93 788.50 2192.90 788.50C2209.60 788.50 2226.30 788.50 2243.00 788.50C2246.67 788.50 2250.33 823.16 2254.00 823.40C2266.00 824.20 2278.00 824.40 2290.00 824.40C2298.60 824.40 2307.20 824.16 2315.80 823.40C2319.43 823.08 2323.07 788.50 2326.70 788.50C2355.67 788.50 2384.63 788.50 2413.60 788.50C2417.27 788.50 2420.93 823.40 2424.60 823.40C2453.07 823.40 2481.53 823.40 2510.00 823.40C2514.33 823.40 2518.67 822.60 2523.00 822.60C2527.27 822.60 2531.53 823.33 2535.80 823.70" stroke="#7fb1f9" stroke-width="1.9" fill="none" stroke-linejoin="round" /><path d="M1807.00 839.90C1814.67 839.53 1822.33 838.80 1830.00 838.80C1836.67 838.80 1843.33 839.90 1850.00 839.90C1860.00 839.90 1870.00 839.50 1880.00 839.50C1890.00 839.50 1900.00 840.00 1910.00 840.00C1923.33 840.00 1936.67 839.20 1950.00 839.20C1963.33 839.20 1976.67 839.90 1990.00 839.90C2003.33 839.90 2016.67 839.00 2030.00 839.00C2046.67 839.00 2063.33 839.90 2080.00 839.90C2093.33 839.90 2106.67 839.40 2120.00 839.40C2133.33 839.40 2146.67 839.57 2160.00 840.00C2164.17 840.14 2168.33 842.20 2172.50 842.20C2179.80 842.20 2187.10 842.20 2194.40 842.20C2198.07 842.20 2201.73 839.90 2205.40 839.90C2246.93 839.90 2288.47 839.90 2330.00 839.90C2340.00 839.90 2350.00 838.90 2360.00 838.90C2370.00 838.90 2380.00 839.90 2390.00 839.90C2400.00 839.90 2410.00 839.00 2420.00 839.00C2430.00 839.00 2440.00 839.90 2450.00 839.90C2460.00 839.90 2470.00 839.20 2480.00 839.20C2498.60 839.20 2517.20 839.67 2535.80 839.90" stroke="#4d8ef0" stroke-width="1.9" fill="none" stroke-linejoin="round" /><path d="M1806.30 860.20C1808.63 875.33 1810.97 905.60 1813.30 905.60C1821.90 905.60 1830.50 905.60 1839.10 905.60C1842.77 905.60 1846.43 836.00 1850.10 836.00C1858.47 836.00 1866.83 836.00 1875.20 836.00C1879.37 836.00 1883.53 905.60 1887.70 905.60C1899.97 905.60 1912.23 905.60 1924.50 905.60C1928.40 905.60 1932.30 836.00 1936.20 836.00C1944.57 836.00 1952.93 836.00 1961.30 836.00C1964.97 836.00 1968.63 905.60 1972.30 905.60C1984.80 905.60 1997.30 905.60 2009.80 905.60C2013.47 905.60 2017.13 836.00 2020.80 836.00C2025.77 836.00 2030.73 836.00 2035.70 836.00C2039.07 836.00 2042.43 905.60 2045.80 905.60C2070.33 905.60 2094.87 905.60 2119.40 905.60C2123.60 905.60 2127.80 836.00 2132.00 836.00C2135.90 836.00 2139.80 905.60 2143.70 905.60C2204.97 905.60 2266.23 905.60 2327.50 905.60C2331.43 905.60 2335.37 836.00 2339.30 836.00C2351.80 836.00 2364.30 836.00 2376.80 836.00C2380.73 836.00 2384.67 905.60 2388.60 905.60C2392.50 905.60 2396.40 836.00 2400.30 836.00C2408.67 836.00 2417.03 836.00 2425.40 836.00C2429.30 836.00 2433.20 905.60 2437.10 905.60C2449.37 905.60 2461.63 905.60 2473.90 905.60C2478.07 905.60 2482.23 836.00 2486.40 836.00C2502.87 836.00 2519.33 836.00 2535.80 836.00" stroke="#6aa3f5" stroke-width="1.9" fill="none" stroke-linejoin="round" /><path d="M2340.00 905.60C2393.00 905.60 2446.00 905.60 2499.00 905.60C2502.90 905.60 2506.80 836.00 2510.70 836.00C2514.63 836.00 2518.57 905.60 2522.50 905.60C2526.93 905.60 2531.37 905.60 2535.80 905.60" stroke="#6aa3f5" stroke-width="1.9" fill="none" stroke-linejoin="round" /><path d="M1887.70 975.00C1891.87 975.00 1896.03 975.00 1900.20 975.00C1903.87 975.00 1907.53 928.73 1911.20 905.60" stroke="#5a98f2" stroke-width="1.8" fill="none" stroke-linejoin="round" /><path d="M1806.00 929.90 L2535.80 929.90" stroke="#2a7de6" stroke-width="2.2" fill="none" stroke-linejoin="round" /><path d="M1997.30 941.60 L2046.60 941.60" stroke="#4a8cf0" stroke-width="2.0" fill="none" stroke-linejoin="round" /><path d="M1806.00 953.90 L2535.80 953.90" stroke="#2a7de6" stroke-width="2.2" fill="none" stroke-linejoin="round" /><path d="M55 1053.5H859.6" stroke="#303237" stroke-width="1"/><path d="M55 1091.5H859.6" stroke="#303237" stroke-width="1"/><path d="M55 1128.5H859.6" stroke="#303237" stroke-width="1"/><path d="M55 1166.5H859.6" stroke="#303237" stroke-width="1"/><path d="M55 1204.5H859.6" stroke="#303237" stroke-width="1"/><path d="M902.4 1045.5H1707" stroke="#303237" stroke-width="1"/><path d="M902.4 1083.5H1707" stroke="#303237" stroke-width="1"/><path d="M902.4 1120.5H1707" stroke="#303237" stroke-width="1"/><path d="M902.4 1158.5H1707" stroke="#303237" stroke-width="1"/><path d="M902.4 1195.5H1707" stroke="#303237" stroke-width="1"/><path d="M1749 1045.5H2554" stroke="#303237" stroke-width="1"/><path d="M1749 1083.5H2554" stroke="#303237" stroke-width="1"/><path d="M1749 1120.5H2554" stroke="#303237" stroke-width="1"/><path d="M1749 1158.5H2554" stroke="#303237" stroke-width="1"/><path d="M1749 1195.5H2554" stroke="#303237" stroke-width="1"/><path d="M838.5 1034.5L843.0 1039.0L847.5 1034.5" stroke="#6e9fff" stroke-width="1.8" fill="none" stroke-linecap="round"/><path d="M1686 1026.5L1690.5 1031.0L1695 1026.5" stroke="#6e9fff" stroke-width="1.8" fill="none" stroke-linecap="round"/><path d="M2533.5 1026.5L2538.0 1031.0L2542.5 1026.5" stroke="#6e9fff" stroke-width="1.8" fill="none" stroke-linecap="round"/><circle cx="70.7" cy="1073" r="3.1" fill="#b877d9"/><circle cx="79.2" cy="1073" r="3.1" fill="#b877d9"/><circle cx="87.7" cy="1073" r="3.1" fill="#b877d9"/><rect x="68" y="1107.8" width="9.5" height="5.6" fill="#f2495c"/><rect x="81" y="1107.8" width="9.5" height="5.6" fill="#f2495c"/><rect x="68" y="1145.2" width="22.5" height="5.8" rx="2.9" fill="#5794f2"/><rect x="68" y="1182.6" width="9.5" height="5.6" fill="#ff9830"/><rect x="81" y="1182.6" width="9.5" height="5.6" fill="#ff9830"/><rect x="915" y="1061.4" width="22" height="6" rx="3" fill="#77abff"/><rect x="915" y="1098.8" width="22" height="6" rx="3" fill="#95c0ff"/><rect x="915" y="1136.3" width="22" height="6" rx="3" fill="#66a1ff"/><rect x="915" y="1173.7" width="22" height="6" rx="3" fill="#5896f4"/><rect x="1761" y="1061.4" width="22" height="6" rx="3" fill="#77abff"/><rect x="1761" y="1098.8" width="22" height="6" rx="3" fill="#95c0ff"/><rect x="1761" y="1136.3" width="22" height="6" rx="3" fill="#66a1ff"/><rect x="1761" y="1173.7" width="22" height="6" rx="3" fill="#5896f4"/><path d="M55 1342.5H2539" stroke="#303237" stroke-width="1"/><path d="M55 1412.5H2539" stroke="#303237" stroke-width="1"/><path d="M55 1469.5H2539" stroke="#303237" stroke-width="1"/><rect x="2138" y="1382.4" width="401" height="21.59999999999991" fill="#393e4a"/><rect x="2138" y="1382.4" width="401" height="3.6" fill="#c0d8ff"/><rect x="2138" y="1439.2" width="401" height="21.799999999999955" fill="#393e4a"/><rect x="2138" y="1439.2" width="401" height="3.6" fill="#c0d8ff"/><rect x="2138" y="1497.2" width="401" height="15.799999999999955" fill="#393e4a"/><rect x="2138" y="1497.2" width="401" height="3.6" fill="#c0d8ff"/><path d="M0 1506Q0 1513 11 1513H2593Q2604 1513 2604 1506V1518H0Z" fill="#0b0b0c"/><path d="M0 1506Q0 1513 11 1513H2593Q2604 1513 2604 1506" stroke="#4a4c50" stroke-width="2" fill="none"/><rect x="0" y="1515" width="2604" height="3" fill="#151515"/><rect x="6" y="1515" width="27" height="3" fill="#0e1230"/></svg>
<div class="t" style="left:40.50px;top:8.64px;font-size:46.5px;font-weight:400;letter-spacing:0.721px;color:#cfcfde;-webkit-text-stroke:0.9px #cfcfde;">k8sdev/aws/helm</div>
<div class="t" style="left:431.90px;top:22.24px;font-size:19.5px;font-weight:700;letter-spacing:0.133px;color:#ffffff;">cluster</div>
<div class="t" style="left:2153.70px;top:20.91px;font-size:23.5px;font-weight:400;letter-spacing:-0.050px;color:#d8d8e6;-webkit-text-stroke:0.99px #d8d8e6;">Last 1 hour</div>
<div class="t" style="left:66.40px;top:116.01px;font-size:24.2px;font-weight:400;letter-spacing:0.086px;color:#9fa0aa;-webkit-text-stroke:0.3px #9fa0aa;">Overview</div>
<div class="t" style="left:219.66px;top:116.01px;font-size:24.2px;font-weight:400;letter-spacing:0.000px;color:#9fa0aa;-webkit-text-stroke:0.3px #9fa0aa;transform:scaleX(0.9388);transform-origin:0 0;">CPU</div>
<div class="t" style="left:318.80px;top:116.01px;font-size:24.2px;font-weight:400;letter-spacing:0.140px;color:#cfcfde;-webkit-text-stroke:0.7px #cfcfde;">Memory</div>
<div class="t" style="left:458.20px;top:116.01px;font-size:24.2px;font-weight:400;letter-spacing:0.583px;color:#9fa0aa;-webkit-text-stroke:0.3px #9fa0aa;">Network</div>
<div class="t" style="left:602.10px;top:116.01px;font-size:24.2px;font-weight:400;letter-spacing:0.050px;color:#9fa0aa;-webkit-text-stroke:0.3px #9fa0aa;">Storage</div>
<div class="t" style="left:736.80px;top:116.01px;font-size:24.2px;font-weight:400;letter-spacing:-0.240px;color:#9fa0aa;-webkit-text-stroke:0.3px #9fa0aa;">Energy</div>
<div class="t" style="left:863.70px;top:116.01px;font-size:24.2px;font-weight:400;letter-spacing:-0.208px;color:#9fa0aa;-webkit-text-stroke:0.3px #9fa0aa;">Logs &amp; Events</div>
<div class="t" style="left:56.00px;top:211.65px;font-size:20.5px;font-weight:400;letter-spacing:0.667px;color:#d0d0de;-webkit-text-stroke:0.86px #d0d0de;">node</div>
<div class="t" style="left:149.90px;top:212.07px;font-size:20px;font-weight:400;letter-spacing:0.500px;color:#d0d0de;-webkit-text-stroke:0.3px #d0d0de;">All</div>
<div class="t" style="left:339.20px;top:211.65px;font-size:20.5px;font-weight:400;letter-spacing:0.350px;color:#d0d0de;-webkit-text-stroke:0.86px #d0d0de;">namespace</div>
<div class="t" style="left:494.80px;top:212.07px;font-size:20px;font-weight:400;letter-spacing:0.500px;color:#d0d0de;-webkit-text-stroke:0.3px #d0d0de;">All</div>
<div class="t" style="left:55.10px;top:288.56px;font-size:24.5px;font-weight:400;letter-spacing:0.179px;color:#cfcfde;-webkit-text-stroke:1.03px #cfcfde;">Efficiency: Requests/Capacity (p95)</div>
<div class="t" style="left:901.20px;top:288.56px;font-size:24.5px;font-weight:400;letter-spacing:0.248px;color:#cfcfde;-webkit-text-stroke:1.03px #cfcfde;">Efficiency: Usage/Capacity (p95)</div>
<div class="t" style="left:1747.60px;top:288.56px;font-size:24.5px;font-weight:400;letter-spacing:0.142px;color:#cfcfde;-webkit-text-stroke:1.03px #cfcfde;">Efficiency: Usage/Requests (p95)</div>
<div class="t" style="left:392.80px;top:374.89px;font-size:54px;font-weight:400;letter-spacing:0.000px;color:#ffa940;-webkit-text-stroke:1.9px #ffa940;">6</div>
<div class="t" style="left:424.25px;top:374.89px;font-size:54px;font-weight:400;letter-spacing:0.000px;color:#ffa940;-webkit-text-stroke:1.9px #ffa940;">.</div>
<div class="t" style="left:459.05px;top:374.89px;font-size:54px;font-weight:400;letter-spacing:0.000px;color:#ffa940;-webkit-text-stroke:1.9px #ffa940;">3</div>
<div class="t" style="left:493.45px;top:393.37px;font-size:32.4px;font-weight:400;letter-spacing:0.000px;color:#ffa940;-webkit-text-stroke:1.2px #ffa940;">%</div>
<div class="t" style="left:1260.85px;top:374.89px;font-size:54px;font-weight:400;letter-spacing:0.000px;color:#ffa940;-webkit-text-stroke:1.9px #ffa940;">4</div>
<div class="t" style="left:1292.30px;top:374.89px;font-size:54px;font-weight:400;letter-spacing:0.000px;color:#ffa940;-webkit-text-stroke:1.9px #ffa940;">.</div>
<div class="t" style="left:1309.55px;top:374.89px;font-size:54px;font-weight:400;letter-spacing:0.000px;color:#ffa940;-webkit-text-stroke:1.9px #ffa940;">5</div>
<div class="t" style="left:1342.65px;top:393.37px;font-size:32.4px;font-weight:400;letter-spacing:0.000px;color:#ffa940;-webkit-text-stroke:1.2px #ffa940;">%</div>
<div class="t" style="left:2086.55px;top:374.89px;font-size:54px;font-weight:400;letter-spacing:0.000px;color:#ff7385;-webkit-text-stroke:1.9px #ff7385;">2</div>
<div class="t" style="left:2120.15px;top:374.89px;font-size:54px;font-weight:400;letter-spacing:0.000px;color:#ff7385;-webkit-text-stroke:1.9px #ff7385;">3</div>
<div class="t" style="left:2153.20px;top:374.89px;font-size:54px;font-weight:400;letter-spacing:0.000px;color:#ff7385;-webkit-text-stroke:1.9px #ff7385;">6</div>
<div class="t" style="left:2187.40px;top:393.37px;font-size:32.4px;font-weight:400;letter-spacing:0.000px;color:#ff7385;-webkit-text-stroke:1.2px #ff7385;">%</div>
<div class="t" style="left:41.50px;top:524.87px;font-size:26.5px;font-weight:400;letter-spacing:0.467px;color:#cfcfde;-webkit-text-stroke:0.3px #cfcfde;">by Node</div>
<div class="t" style="left:54.60px;top:594.66px;font-size:24.5px;font-weight:400;letter-spacing:0.066px;color:#cfcfde;-webkit-text-stroke:1.03px #cfcfde;">Overview: Usage (memory bytes)</div>
<div class="t" style="left:901.40px;top:594.66px;font-size:24.5px;font-weight:400;letter-spacing:0.143px;color:#cfcfde;-webkit-text-stroke:1.03px #cfcfde;">Distribution: Node Usage/Cluster Capacity (%, stacked)</div>
<div class="t" style="left:1748.00px;top:594.66px;font-size:24.5px;font-weight:400;letter-spacing:0.128px;color:#cfcfde;-webkit-text-stroke:1.03px #cfcfde;">Efficiency: Node Usage/Node Capacity (%)</div>
<div class="t" style="left:61.70px;top:678.82px;font-size:19px;font-weight:400;letter-spacing:0.700px;color:#cfcfde;-webkit-text-stroke:0.3px #cfcfde;">48 GiB</div>
<div class="t" style="left:61.70px;top:727.62px;font-size:19px;font-weight:400;letter-spacing:0.700px;color:#cfcfde;-webkit-text-stroke:0.3px #cfcfde;">40 GiB</div>
<div class="t" style="left:61.70px;top:776.42px;font-size:19px;font-weight:400;letter-spacing:0.700px;color:#cfcfde;-webkit-text-stroke:0.3px #cfcfde;">32 GiB</div>
<div class="t" style="left:61.70px;top:825.42px;font-size:19px;font-weight:400;letter-spacing:0.700px;color:#cfcfde;-webkit-text-stroke:0.3px #cfcfde;">24 GiB</div>
<div class="t" style="left:61.70px;top:874.42px;font-size:19px;font-weight:400;letter-spacing:0.700px;color:#cfcfde;-webkit-text-stroke:0.3px #cfcfde;">16 GiB</div>
<div class="t" style="left:73.40px;top:923.42px;font-size:19px;font-weight:400;letter-spacing:0.700px;color:#cfcfde;-webkit-text-stroke:0.3px #cfcfde;">8 GiB</div>
<div class="t" style="left:93.80px;top:972.22px;font-size:19px;font-weight:400;letter-spacing:0.700px;color:#cfcfde;-webkit-text-stroke:0.3px #cfcfde;">0 B</div>
<div class="t" style="left:209.40px;top:996.12px;font-size:19px;font-weight:400;letter-spacing:0.700px;color:#cfcfde;-webkit-text-stroke:0.3px #cfcfde;">11:40</div>
<div class="t" style="left:328.40px;top:996.12px;font-size:19px;font-weight:400;letter-spacing:0.700px;color:#cfcfde;-webkit-text-stroke:0.3px #cfcfde;">11:50</div>
<div class="t" style="left:446.80px;top:996.12px;font-size:19px;font-weight:400;letter-spacing:0.700px;color:#cfcfde;-webkit-text-stroke:0.3px #cfcfde;">12:00</div>
<div class="t" style="left:565.80px;top:996.12px;font-size:19px;font-weight:400;letter-spacing:0.700px;color:#cfcfde;-webkit-text-stroke:0.3px #cfcfde;">12:10</div>
<div class="t" style="left:686.10px;top:996.12px;font-size:19px;font-weight:400;letter-spacing:0.700px;color:#cfcfde;-webkit-text-stroke:0.3px #cfcfde;">12:20</div>
<div class="t" style="left:805.00px;top:996.12px;font-size:19px;font-weight:400;letter-spacing:0.700px;color:#cfcfde;-webkit-text-stroke:0.3px #cfcfde;">12:30</div>
<div class="t" style="left:922.10px;top:667.92px;font-size:19px;font-weight:400;letter-spacing:0.700px;color:#cfcfde;-webkit-text-stroke:0.3px #cfcfde;">15%</div>
<div class="t" style="left:904.70px;top:717.12px;font-size:19px;font-weight:400;letter-spacing:0.700px;color:#cfcfde;-webkit-text-stroke:0.3px #cfcfde;">12.5%</div>
<div class="t" style="left:922.10px;top:766.62px;font-size:19px;font-weight:400;letter-spacing:0.700px;color:#cfcfde;-webkit-text-stroke:0.3px #cfcfde;">10%</div>
<div class="t" style="left:916.40px;top:815.42px;font-size:19px;font-weight:400;letter-spacing:0.700px;color:#cfcfde;-webkit-text-stroke:0.3px #cfcfde;">7.5%</div>
<div class="t" style="left:933.80px;top:865.42px;font-size:19px;font-weight:400;letter-spacing:0.700px;color:#cfcfde;-webkit-text-stroke:0.3px #cfcfde;">5%</div>
<div class="t" style="left:916.40px;top:914.42px;font-size:19px;font-weight:400;letter-spacing:0.700px;color:#cfcfde;-webkit-text-stroke:0.3px #cfcfde;">2.5%</div>
<div class="t" style="left:933.80px;top:964.92px;font-size:19px;font-weight:400;letter-spacing:0.700px;color:#cfcfde;-webkit-text-stroke:0.3px #cfcfde;">0%</div>
<div class="t" style="left:1050.60px;top:987.52px;font-size:19px;font-weight:400;letter-spacing:0.700px;color:#cfcfde;-webkit-text-stroke:0.3px #cfcfde;">11:40</div>
<div class="t" style="left:1171.70px;top:987.52px;font-size:19px;font-weight:400;letter-spacing:0.700px;color:#cfcfde;-webkit-text-stroke:0.3px #cfcfde;">11:50</div>
<div class="t" style="left:1291.00px;top:987.52px;font-size:19px;font-weight:400;letter-spacing:0.700px;color:#cfcfde;-webkit-text-stroke:0.3px #cfcfde;">12:00</div>
<div class="t" style="left:1411.20px;top:987.52px;font-size:19px;font-weight:400;letter-spacing:0.700px;color:#cfcfde;-webkit-text-stroke:0.3px #cfcfde;">12:10</div>
<div class="t" style="left:1530.90px;top:987.52px;font-size:19px;font-weight:400;letter-spacing:0.700px;color:#cfcfde;-webkit-text-stroke:0.3px #cfcfde;">12:20</div>
<div class="t" style="left:1652.10px;top:987.52px;font-size:19px;font-weight:400;letter-spacing:0.700px;color:#cfcfde;-webkit-text-stroke:0.3px #cfcfde;">12:30</div>
<div class="t" style="left:1757.20px;top:647.82px;font-size:19px;font-weight:400;letter-spacing:0.700px;color:#cfcfde;-webkit-text-stroke:0.3px #cfcfde;">30%</div>
<div class="t" style="left:1757.20px;top:700.92px;font-size:19px;font-weight:400;letter-spacing:0.700px;color:#cfcfde;-webkit-text-stroke:0.3px #cfcfde;">25%</div>
<div class="t" style="left:1757.20px;top:754.02px;font-size:19px;font-weight:400;letter-spacing:0.700px;color:#cfcfde;-webkit-text-stroke:0.3px #cfcfde;">20%</div>
<div class="t" style="left:1757.20px;top:807.12px;font-size:19px;font-weight:400;letter-spacing:0.700px;color:#cfcfde;-webkit-text-stroke:0.3px #cfcfde;">15%</div>
<div class="t" style="left:1757.20px;top:859.12px;font-size:19px;font-weight:400;letter-spacing:0.700px;color:#cfcfde;-webkit-text-stroke:0.3px #cfcfde;">10%</div>
<div class="t" style="left:1768.90px;top:911.82px;font-size:19px;font-weight:400;letter-spacing:0.700px;color:#cfcfde;-webkit-text-stroke:0.3px #cfcfde;">5%</div>
<div class="t" style="left:1768.90px;top:964.52px;font-size:19px;font-weight:400;letter-spacing:0.700px;color:#cfcfde;-webkit-text-stroke:0.3px #cfcfde;">0%</div>
<div class="t" style="left:1886.10px;top:988.32px;font-size:19px;font-weight:400;letter-spacing:0.700px;color:#cfcfde;-webkit-text-stroke:0.3px #cfcfde;">11:40</div>
<div class="t" style="left:2009.30px;top:988.32px;font-size:19px;font-weight:400;letter-spacing:0.700px;color:#cfcfde;-webkit-text-stroke:0.3px #cfcfde;">11:50</div>
<div class="t" style="left:2130.60px;top:988.32px;font-size:19px;font-weight:400;letter-spacing:0.700px;color:#cfcfde;-webkit-text-stroke:0.3px #cfcfde;">12:00</div>
<div class="t" style="left:2252.60px;top:988.32px;font-size:19px;font-weight:400;letter-spacing:0.700px;color:#cfcfde;-webkit-text-stroke:0.3px #cfcfde;">12:10</div>
<div class="t" style="left:2375.10px;top:988.32px;font-size:19px;font-weight:400;letter-spacing:0.700px;color:#cfcfde;-webkit-text-stroke:0.3px #cfcfde;">12:20</div>
<div class="t" style="left:2497.20px;top:988.32px;font-size:19px;font-weight:400;letter-spacing:0.700px;color:#cfcfde;-webkit-text-stroke:0.3px #cfcfde;">12:30</div>
<div class="t" style="left:102.73px;top:1024.32px;font-size:21px;font-weight:400;letter-spacing:0.000px;color:#6e9fff;-webkit-text-stroke:0.88px #6e9fff;transform:scaleX(0.9709);transform-origin:0 0;">Name</div>
<div class="t" style="left:766.80px;top:1024.32px;font-size:21px;font-weight:400;letter-spacing:0.180px;color:#6e9fff;-webkit-text-stroke:0.88px #6e9fff;">95th %</div>
<div class="t" style="left:102.70px;top:1062.45px;font-size:20.5px;font-weight:400;letter-spacing:0.341px;color:#cfcfde;-webkit-text-stroke:0.3px #cfcfde;">Physical capacity of cluster</div>
<div class="t" style="left:771.00px;top:1062.45px;font-size:20.5px;font-weight:400;letter-spacing:0.000px;color:#cfcfde;-webkit-text-stroke:0.3px #cfcfde;transform:scaleX(0.9582);transform-origin:0 0;">47.6 GiB</div>
<div class="t" style="left:102.70px;top:1099.95px;font-size:20.5px;font-weight:400;letter-spacing:0.228px;color:#cfcfde;-webkit-text-stroke:0.3px #cfcfde;">Sum of container Memory limits</div>
<div class="t" style="left:773.47px;top:1099.95px;font-size:20.5px;font-weight:400;letter-spacing:0.000px;color:#cfcfde;-webkit-text-stroke:0.3px #cfcfde;transform:scaleX(0.9269);transform-origin:0 0;">17.0 GiB</div>
<div class="t" style="left:102.70px;top:1137.45px;font-size:20.5px;font-weight:400;letter-spacing:0.200px;color:#cfcfde;-webkit-text-stroke:0.3px #cfcfde;">Sum of container Memory usage</div>
<div class="t" style="left:767.20px;top:1137.45px;font-size:20.5px;font-weight:400;letter-spacing:0.071px;color:#cfcfde;-webkit-text-stroke:0.3px #cfcfde;">6.89 GiB</div>
<div class="t" style="left:102.70px;top:1174.95px;font-size:20.5px;font-weight:400;letter-spacing:0.229px;color:#cfcfde;-webkit-text-stroke:0.3px #cfcfde;">Sum of container Memory requests</div>
<div class="t" style="left:767.20px;top:1174.95px;font-size:20.5px;font-weight:400;letter-spacing:0.071px;color:#cfcfde;-webkit-text-stroke:0.3px #cfcfde;">2.92 GiB</div>
<div class="t" style="left:948.93px;top:1016.22px;font-size:21px;font-weight:400;letter-spacing:0.000px;color:#6e9fff;-webkit-text-stroke:0.88px #6e9fff;transform:scaleX(0.9709);transform-origin:0 0;">Name</div>
<div class="t" style="left:1614.00px;top:1016.22px;font-size:21px;font-weight:400;letter-spacing:-0.020px;color:#6e9fff;-webkit-text-stroke:0.88px #6e9fff;">95th %</div>
<div class="t" style="left:948.90px;top:1053.85px;font-size:20.5px;font-weight:400;letter-spacing:0.328px;color:#cfcfde;-webkit-text-stroke:0.3px #cfcfde;">ip-192-168-177-94.us-west-2.compute.internal</div>
<div class="t" style="left:1632.80px;top:1053.85px;font-size:20.5px;font-weight:400;letter-spacing:0.425px;color:#cfcfde;-webkit-text-stroke:0.3px #cfcfde;">8.60%</div>
<div class="t" style="left:948.90px;top:1091.35px;font-size:20.5px;font-weight:400;letter-spacing:0.337px;color:#cfcfde;-webkit-text-stroke:0.3px #cfcfde;">ip-192-168-33-218.us-west-2.compute.internal</div>
<div class="t" style="left:1634.50px;top:1091.35px;font-size:20.5px;font-weight:400;letter-spacing:0.000px;color:#cfcfde;-webkit-text-stroke:0.3px #cfcfde;">2.78%</div>
<div class="t" style="left:949.90px;top:1128.65px;font-size:20.5px;font-weight:400;letter-spacing:0.185px;color:#cfcfde;-webkit-text-stroke:0.3px #cfcfde;">fargate-ip-192-168-177-161.us-west-2.compute.internal</div>
<div class="t" style="left:1636.94px;top:1128.65px;font-size:20.5px;font-weight:400;letter-spacing:0.000px;color:#cfcfde;-webkit-text-stroke:0.3px #cfcfde;transform:scaleX(0.9579);transform-origin:0 0;">1.05%</div>
<div class="t" style="left:949.90px;top:1166.35px;font-size:20.5px;font-weight:400;letter-spacing:0.362px;color:#cfcfde;-webkit-text-stroke:0.3px #cfcfde;">fargate-ip-192-168-108-229.us-west-2.compute.internal</div>
<div class="t" style="left:1636.94px;top:1166.35px;font-size:20.5px;font-weight:400;letter-spacing:0.000px;color:#cfcfde;-webkit-text-stroke:0.3px #cfcfde;transform:scaleX(0.9579);transform-origin:0 0;">1.05%</div>
<div class="t" style="left:1795.73px;top:1016.22px;font-size:21px;font-weight:400;letter-spacing:0.000px;color:#6e9fff;-webkit-text-stroke:0.88px #6e9fff;transform:scaleX(0.9709);transform-origin:0 0;">Name</div>
<div class="t" style="left:2461.00px;top:1016.22px;font-size:21px;font-weight:400;letter-spacing:0.000px;color:#6e9fff;-webkit-text-stroke:0.88px #6e9fff;">95th %</div>
<div class="t" style="left:1795.70px;top:1053.85px;font-size:20.5px;font-weight:400;letter-spacing:0.328px;color:#cfcfde;-webkit-text-stroke:0.3px #cfcfde;">ip-192-168-177-94.us-west-2.compute.internal</div>
<div class="t" style="left:2481.70px;top:1053.85px;font-size:20.5px;font-weight:400;letter-spacing:-0.100px;color:#cfcfde;-webkit-text-stroke:0.3px #cfcfde;">26.7%</div>
<div class="t" style="left:1795.70px;top:1091.35px;font-size:20.5px;font-weight:400;letter-spacing:0.337px;color:#cfcfde;-webkit-text-stroke:0.3px #cfcfde;">ip-192-168-33-218.us-west-2.compute.internal</div>
<div class="t" style="left:2488.42px;top:1091.35px;font-size:20.5px;font-weight:400;letter-spacing:0.000px;color:#cfcfde;-webkit-text-stroke:0.3px #cfcfde;transform:scaleX(0.8772);transform-origin:0 0;">17.7%</div>
<div class="t" style="left:1796.70px;top:1128.65px;font-size:20.5px;font-weight:400;letter-spacing:0.185px;color:#cfcfde;-webkit-text-stroke:0.3px #cfcfde;">fargate-ip-192-168-177-161.us-west-2.compute.internal</div>
<div class="t" style="left:2484.05px;top:1128.65px;font-size:20.5px;font-weight:400;letter-spacing:0.000px;color:#cfcfde;-webkit-text-stroke:0.3px #cfcfde;transform:scaleX(0.9526);transform-origin:0 0;">13.3%</div>
<div class="t" style="left:1796.70px;top:1166.35px;font-size:20.5px;font-weight:400;letter-spacing:0.362px;color:#cfcfde;-webkit-text-stroke:0.3px #cfcfde;">fargate-ip-192-168-108-229.us-west-2.compute.internal</div>
<div class="t" style="left:2484.05px;top:1166.35px;font-size:20.5px;font-weight:400;letter-spacing:0.000px;color:#cfcfde;-webkit-text-stroke:0.3px #cfcfde;transform:scaleX(0.9526);transform-origin:0 0;">13.2%</div>
<div class="t" style="left:53.80px;top:1246.76px;font-size:24.5px;font-weight:400;letter-spacing:0.175px;color:#cfcfde;-webkit-text-stroke:1.03px #cfcfde;">Nodes</div>
<div class="t" style="left:67.83px;top:1309.27px;font-size:20px;font-weight:400;letter-spacing:0.000px;color:#d0d0de;-webkit-text-stroke:0.84px #d0d0de;transform:scaleX(0.8702);transform-origin:0 0;">NODE</div>
<div class="t" style="left:482.50px;top:1309.27px;font-size:20px;font-weight:400;letter-spacing:0.000px;color:#d0d0de;-webkit-text-stroke:0.84px #d0d0de;transform:scaleX(0.8483);transform-origin:0 0;">OS</div>
<div class="t" style="left:896.20px;top:1309.27px;font-size:20px;font-weight:400;letter-spacing:0.000px;color:#d0d0de;-webkit-text-stroke:0.84px #d0d0de;transform:scaleX(0.8995);transform-origin:0 0;">CAPACITY (BYTES)</div>
<div class="t" style="left:1309.60px;top:1309.27px;font-size:20px;font-weight:400;letter-spacing:0.000px;color:#d0d0de;-webkit-text-stroke:0.84px #d0d0de;transform:scaleX(0.8976);transform-origin:0 0;">USAGE (P95)</div>
<div class="t" style="left:1723.39px;top:1309.27px;font-size:20px;font-weight:400;letter-spacing:0.000px;color:#d0d0de;-webkit-text-stroke:0.84px #d0d0de;transform:scaleX(0.9070);transform-origin:0 0;">USAGE/CAPACITY (P95, %)</div>
<div class="t" style="left:2136.61px;top:1309.27px;font-size:20px;font-weight:400;letter-spacing:0.000px;color:#d0d0de;-webkit-text-stroke:0.84px #d0d0de;transform:scaleX(0.8929);transform-origin:0 0;">EXISTS</div>
<div class="t" style="left:68.70px;top:1372.28px;font-size:24px;font-weight:400;letter-spacing:0.513px;color:#6e9fff;-webkit-text-stroke:0.3px #6e9fff;">fargate-ip-192-168-108-229.us...</div>
<div class="t" style="left:482.50px;top:1372.28px;font-size:24px;font-weight:400;letter-spacing:0.038px;color:#cfcfde;-webkit-text-stroke:0.3px #cfcfde;">Amazon Linux 2</div>
<div class="t" style="left:895.80px;top:1372.28px;font-size:24px;font-weight:400;letter-spacing:-0.386px;color:#cfcfde;-webkit-text-stroke:0.3px #cfcfde;">3.76 GiB</div>
<div class="t" style="left:1309.00px;top:1372.28px;font-size:24px;font-weight:400;letter-spacing:0.617px;color:#cfcfde;-webkit-text-stroke:0.3px #cfcfde;">509 MiB</div>
<div class="t" style="left:1721.70px;top:1372.28px;font-size:24px;font-weight:400;letter-spacing:-0.425px;color:#ffa940;-webkit-text-stroke:0.3px #ffa940;">13.2%</div>
<div class="t" style="left:68.70px;top:1429.88px;font-size:24px;font-weight:400;letter-spacing:0.247px;color:#6e9fff;-webkit-text-stroke:0.3px #6e9fff;">fargate-ip-192-168-177-161.us-...</div>
<div class="t" style="left:482.50px;top:1429.88px;font-size:24px;font-weight:400;letter-spacing:0.038px;color:#cfcfde;-webkit-text-stroke:0.3px #cfcfde;">Amazon Linux 2</div>
<div class="t" style="left:895.80px;top:1429.88px;font-size:24px;font-weight:400;letter-spacing:-0.386px;color:#cfcfde;-webkit-text-stroke:0.3px #cfcfde;">3.76 GiB</div>
<div class="t" style="left:1309.00px;top:1429.88px;font-size:24px;font-weight:400;letter-spacing:0.617px;color:#cfcfde;-webkit-text-stroke:0.3px #cfcfde;">510 MiB</div>
<div class="t" style="left:1721.70px;top:1429.88px;font-size:24px;font-weight:400;letter-spacing:-0.425px;color:#ffa940;-webkit-text-stroke:0.3px #ffa940;">13.3%</div>
<div class="t" style="left:67.70px;top:1487.48px;font-size:24px;font-weight:400;letter-spacing:0.577px;color:#6e9fff;-webkit-text-stroke:0.3px #6e9fff;">ip-192-168-113-48.us-west-2.c...</div>
<div class="t" style="left:482.50px;top:1487.48px;font-size:24px;font-weight:400;letter-spacing:0.038px;color:#cfcfde;-webkit-text-stroke:0.3px #cfcfde;">Amazon Linux 2</div>
<div class="t" style="left:894.80px;top:1487.48px;font-size:24px;font-weight:400;letter-spacing:-0.243px;color:#cfcfde;-webkit-text-stroke:0.3px #cfcfde;">1.80 GiB</div>
<div class="t" style="left:1309.00px;top:1487.48px;font-size:24px;font-weight:400;letter-spacing:0.617px;color:#cfcfde;-webkit-text-stroke:0.3px #cfcfde;">238 MiB</div>
<div class="t" style="left:1721.70px;top:1487.48px;font-size:24px;font-weight:400;letter-spacing:-0.425px;color:#ffa940;-webkit-text-stroke:0.3px #ffa940;">12.9%</div>
</body></html>
